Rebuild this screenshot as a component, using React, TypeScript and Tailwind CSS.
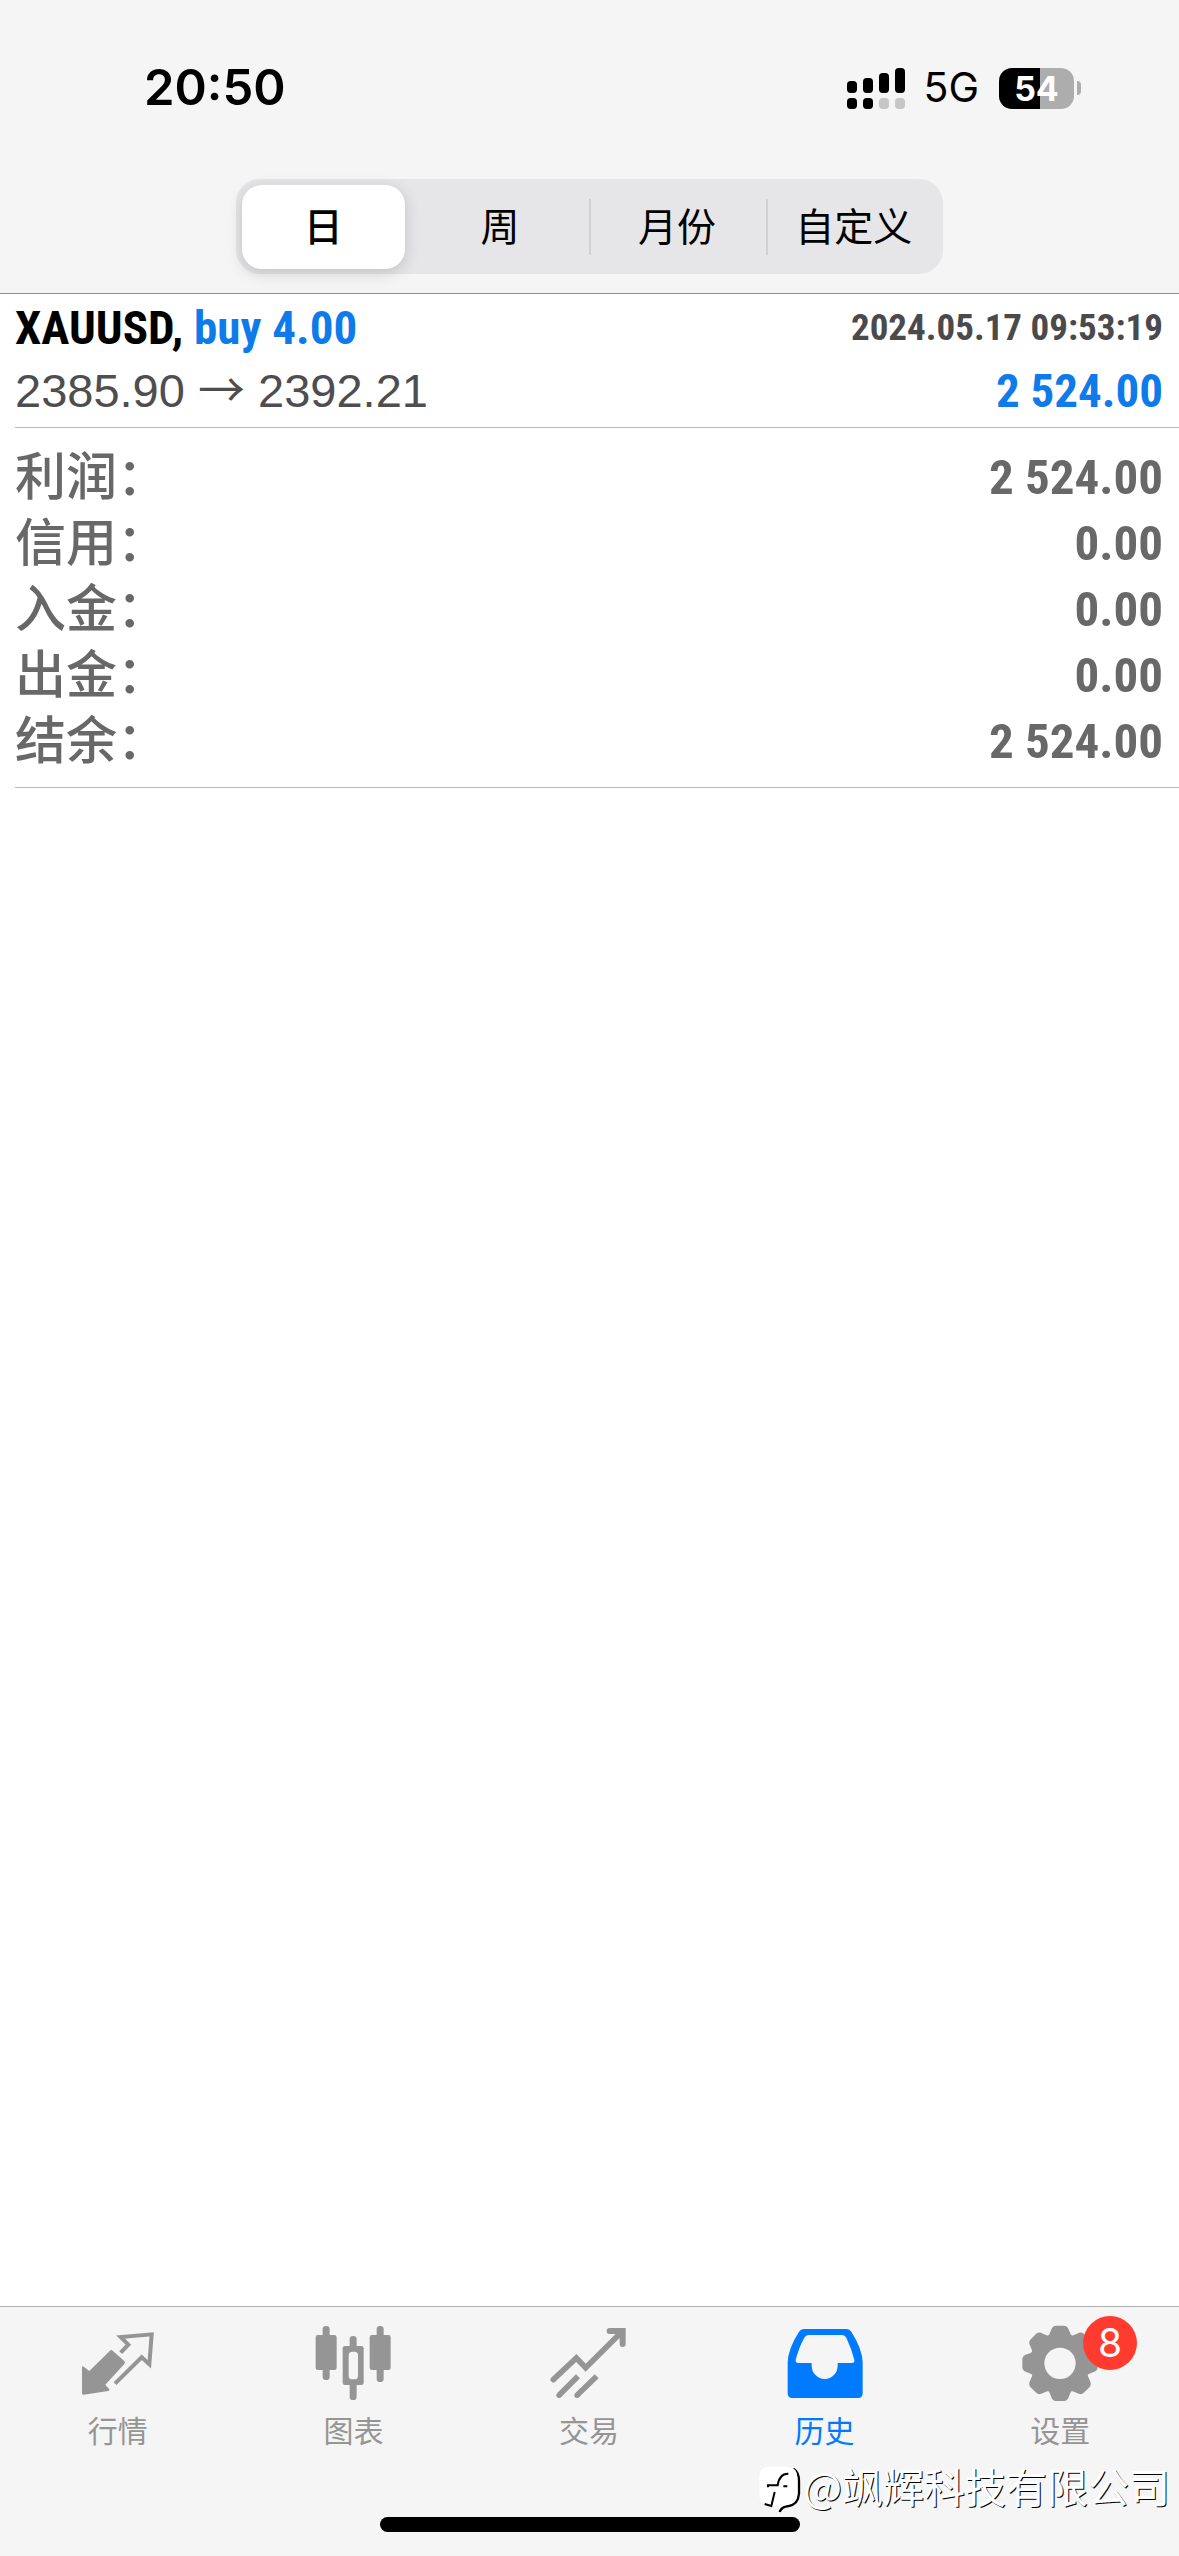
import { useState } from "react";
import clsx from "clsx";

const PERIODS = ["日", "周", "月份", "自定义"];

const SUMMARY = [
  { label: "利润", value: "2 524.00" },
  { label: "信用", value: "0.00" },
  { label: "入金", value: "0.00" },
  { label: "出金", value: "0.00" },
  { label: "结余", value: "2 524.00" },
];

const narrow = "font-['Roboto_Condensed','Noto_Sans_CJK_SC',sans-serif] font-bold";

const QuotesIcon = () => (
  <svg viewBox="0 0 252 252" className="h-[84px] w-[84px]" fill="currentColor" aria-hidden="true">
    <path d="M18 133Q18 127 23 131L40 144L102 83Q106 79 110 83L145 114Q149 118 145 123L88 185L100 199Q102 203 97 204L23 215Q18 216 18 211Z" />
    <path
      d="M134 89L157 65L134 42L227 34L220 124L197 103L117 182"
      fill="none"
      stroke="currentColor"
      strokeWidth="12"
    />
  </svg>
);

const ChartIcon = () => (
  <svg viewBox="0 0 252 252" className="h-[84px] w-[84px]" fill="currentColor" aria-hidden="true">
    <rect x="35" y="9" width="21" height="162" rx="10" />
    <rect x="14" y="36" width="63" height="105" rx="7" />
    <rect x="197" y="9" width="21" height="168" rx="10" />
    <rect x="176" y="36" width="63" height="105" rx="7" />
    <rect x="116" y="39" width="21" height="192" rx="10" />
    <rect x="95" y="69" width="63" height="117" rx="7" />
    <rect x="113" y="86" width="28" height="83" rx="11" fill="#f5f5f5" />
  </svg>
);

const TradeIcon = () => (
  <svg viewBox="0 0 252 252" className="h-[84px] w-[84px]" fill="none" stroke="currentColor" strokeWidth="17" aria-hidden="true">
    <path d="M19 170L88 105L116 134L226 25" strokeLinecap="round" />
    <path d="M188 24H227V63" strokeWidth="18" strokeLinecap="round" />
    <path d="M200 24H227V51Z" fill="currentColor" strokeWidth="6" />
    <path d="M36 217L93 160M90 217L149 160" />
    <circle cx="36" cy="217" r="8" fill="currentColor" stroke="none" />
    <circle cx="90" cy="217" r="8" fill="currentColor" stroke="none" />
  </svg>
);

const HistoryIcon = () => (
  <svg viewBox="0 0 252 252" className="h-[84px] w-[84px]" fill="currentColor" fillRule="evenodd" aria-hidden="true">
    <path d="M62 18H191Q200 18 205 26Q238 78 239 118V211Q239 225 225 225H28Q14 225 14 211V118Q15 78 48 26Q53 18 62 18ZM76 36Q68 36 64 44Q48 72 38 111Q37 120 46 120H86V128A39 40 0 0 0 164 128V120H206Q216 120 214 111Q206 78 190 44Q186 36 178 36Z" />
  </svg>
);

const SettingsIcon = () => (
  <svg viewBox="-126 -121 252 252" className="h-[84px] w-[84px]" fill="currentColor" aria-hidden="true">
    <circle r="88" />
    {[0, 45, 90, 135, 180, 225, 270, 315].map((angle) => (
      <path
        key={angle}
        transform={`rotate(${angle})`}
        d="M-42 -74Q-30 -86 -27 -99Q-23 -113 -12 -113H12Q23 -113 27 -99Q30 -86 42 -74Z"
      />
    ))}
    <circle r="47" fill="#f5f5f5" />
  </svg>
);

const TABS = [
  { label: "行情", Icon: QuotesIcon },
  { label: "图表", Icon: ChartIcon },
  { label: "交易", Icon: TradeIcon },
  { label: "历史", Icon: HistoryIcon },
  { label: "设置", Icon: SettingsIcon, badge: 8 },
];

const StatusBar = () => (
  <div className="flex h-[52px] items-center justify-between pr-[98px] pl-[144px] font-[Inter,sans-serif] text-black">
    <span className="text-[49px] font-semibold">20:50</span>
    <div className="flex items-center">
      <svg viewBox="0 0 174 123" className="h-[41px] w-[58px]" aria-hidden="true">
        <rect x="0" y="39" width="30" height="36" rx="11" />
        <rect x="48" y="30" width="30" height="45" rx="11" />
        <rect x="96" y="15" width="30" height="60" rx="11" />
        <rect x="144" y="0" width="30" height="75" rx="11" />
        <rect x="0" y="90" width="30" height="33" rx="11" />
        <rect x="48" y="90" width="30" height="33" rx="11" />
        <rect x="96" y="90" width="30" height="33" rx="11" fill="#c6c6c6" />
        <rect x="144" y="90" width="30" height="33" rx="11" fill="#c6c6c6" />
      </svg>
      <span className="ml-[18px] text-[41px]">5G</span>
      <span className="ml-5 flex h-[41px] w-[75px] items-center justify-center rounded-[13px] bg-linear-to-r from-black from-55% to-[#adadad] to-55% text-[34px] font-bold text-white">
        54
      </span>
      <span className="ml-[3px] h-[14px] w-1 rounded-r-full bg-[#adadad]" />
    </div>
  </div>
);

const PeriodPicker = () => {
  const [period, setPeriod] = useState("日");
  const selected = PERIODS.indexOf(period);

  return (
    <div role="group" className="mx-auto mt-[65px] flex h-[95px] w-3/5 items-center rounded-[24px] bg-[#e6e6e8]">
      {PERIODS.map((name, i) => (
        <div
          key={name}
          className={clsx(
            "flex h-[56px] flex-1 items-center border-l-[2px]",
            i === 0 || i === selected || i === selected + 1 ? "border-transparent" : "border-[#d0d0d2]"
          )}
        >
          <button
            type="button"
            aria-pressed={i === selected}
            onClick={() => setPeriod(name)}
            className={clsx(
              "mr-2 ml-1 h-[84px] flex-1 rounded-[20px] pt-1 text-[39px] whitespace-nowrap text-black",
              i === selected && "bg-white font-medium shadow-[0_4px_16px_rgba(0,0,0,0.16)]"
            )}
          >
            {name}
          </button>
        </div>
      ))}
    </div>
  );
};

const Deal = () => (
  <div className="ml-[15px] border-b border-[#bababc] pt-[2px] pr-4 pb-[5px] leading-[63px]">
    <div className="flex justify-between">
      <span className={clsx(narrow, "text-[47px] text-black")}>
        XAUUSD, <span className="text-[#0f7bea]">buy 4.00</span>
      </span>
      <time className={clsx(narrow, "text-[37px] text-[#4a4a4c]")}>2024.05.17 09:53:19</time>
    </div>
    <div className="flex justify-between">
      <span className="text-[47px] text-[#4e4e50]">
        2385.90 <span className="font-['Noto_Sans_CJK_SC',sans-serif] leading-none">→</span> 2392.21
      </span>
      <span className={clsx(narrow, "text-[47px] text-[#0f7bea]")}>2 524.00</span>
    </div>
  </div>
);

const Summary = () => (
  <dl className="ml-[15px] border-b border-[#bababc] pt-[17px] pr-4 pb-3 leading-[66px] text-[#686868]">
    {SUMMARY.map((row) => (
      <div key={row.label} className="flex justify-between">
        <dt className="text-[51px] font-medium">{row.label}：</dt>
        <dd className={clsx(narrow, "text-[49px]")}>{row.value}</dd>
      </div>
    ))}
  </dl>
);

const Watermark = () => (
  <div className="pointer-events-none absolute right-[9px] bottom-[43px] flex items-center font-['Noto_Sans_CJK_SC',sans-serif] text-[41px] leading-[48px] whitespace-nowrap text-white">
    <svg viewBox="0 0 135 141" className="mt-[10px] h-[47px] w-[45px]" fill="none" aria-hidden="true">
      <path d="M106 8Q123 18 123 45V82Q121 114 92 120Q70 122 65 138" stroke="#000" strokeWidth="7" />
      <path d="M32 2H88Q118 4 118 34V86Q116 114 88 117Q70 118 62 132V120L34 118Q4 114 4 86V34Q4 4 32 2Z" fill="#fff" />
      <path d="M91 23Q64 22 59 58H30V64M50 78L40 120L20 114M76 61H88" stroke="#000" strokeWidth="6" />
    </svg>
    <span className="[text-shadow:1px_1px_0_#000]">@飒辉科技有限公司</span>
  </div>
);

const TabBar = () => {
  const [active, setActive] = useState("历史");

  return (
    <footer className="relative border-t border-[#b0b0b2] bg-[#f5f5f5] pb-6">
      <nav className="grid grid-cols-5 pt-4 pr-px">
        {TABS.map(({ label, Icon, badge }) => (
          <button
            key={label}
            type="button"
            onClick={() => setActive(label)}
            className={clsx("flex flex-col items-center", active === label ? "text-[#007aff]" : "text-[#959595]")}
          >
            <span className="relative">
              <Icon />
              {badge && (
                <span className="absolute -top-[7px] left-[65px] flex h-[54px] w-[54px] items-center justify-center rounded-full bg-[#ff3b30] font-[Inter,sans-serif] text-[39px] text-white">
                  {badge}
                </span>
              )}
            </span>
            <span className="text-[30px] leading-[50px]">{label}</span>
          </button>
        ))}
      </nav>
      <div className="mx-auto mt-[60px] h-[15px] w-[420px] rounded-full bg-black" />
      <Watermark />
    </footer>
  );
};

export default function App() {
  return (
    <div className="flex min-h-screen flex-col bg-white font-['Liberation_Sans','Noto_Sans_CJK_SC',sans-serif]">
      <header className="border-b border-[#8e8e90] bg-[#f5f5f5] pt-[62px] pb-[19px]">
        <StatusBar />
        <PeriodPicker />
      </header>
      <main className="flex-1">
        <Deal />
        <Summary />
      </main>
      <TabBar />
    </div>
  );
}
